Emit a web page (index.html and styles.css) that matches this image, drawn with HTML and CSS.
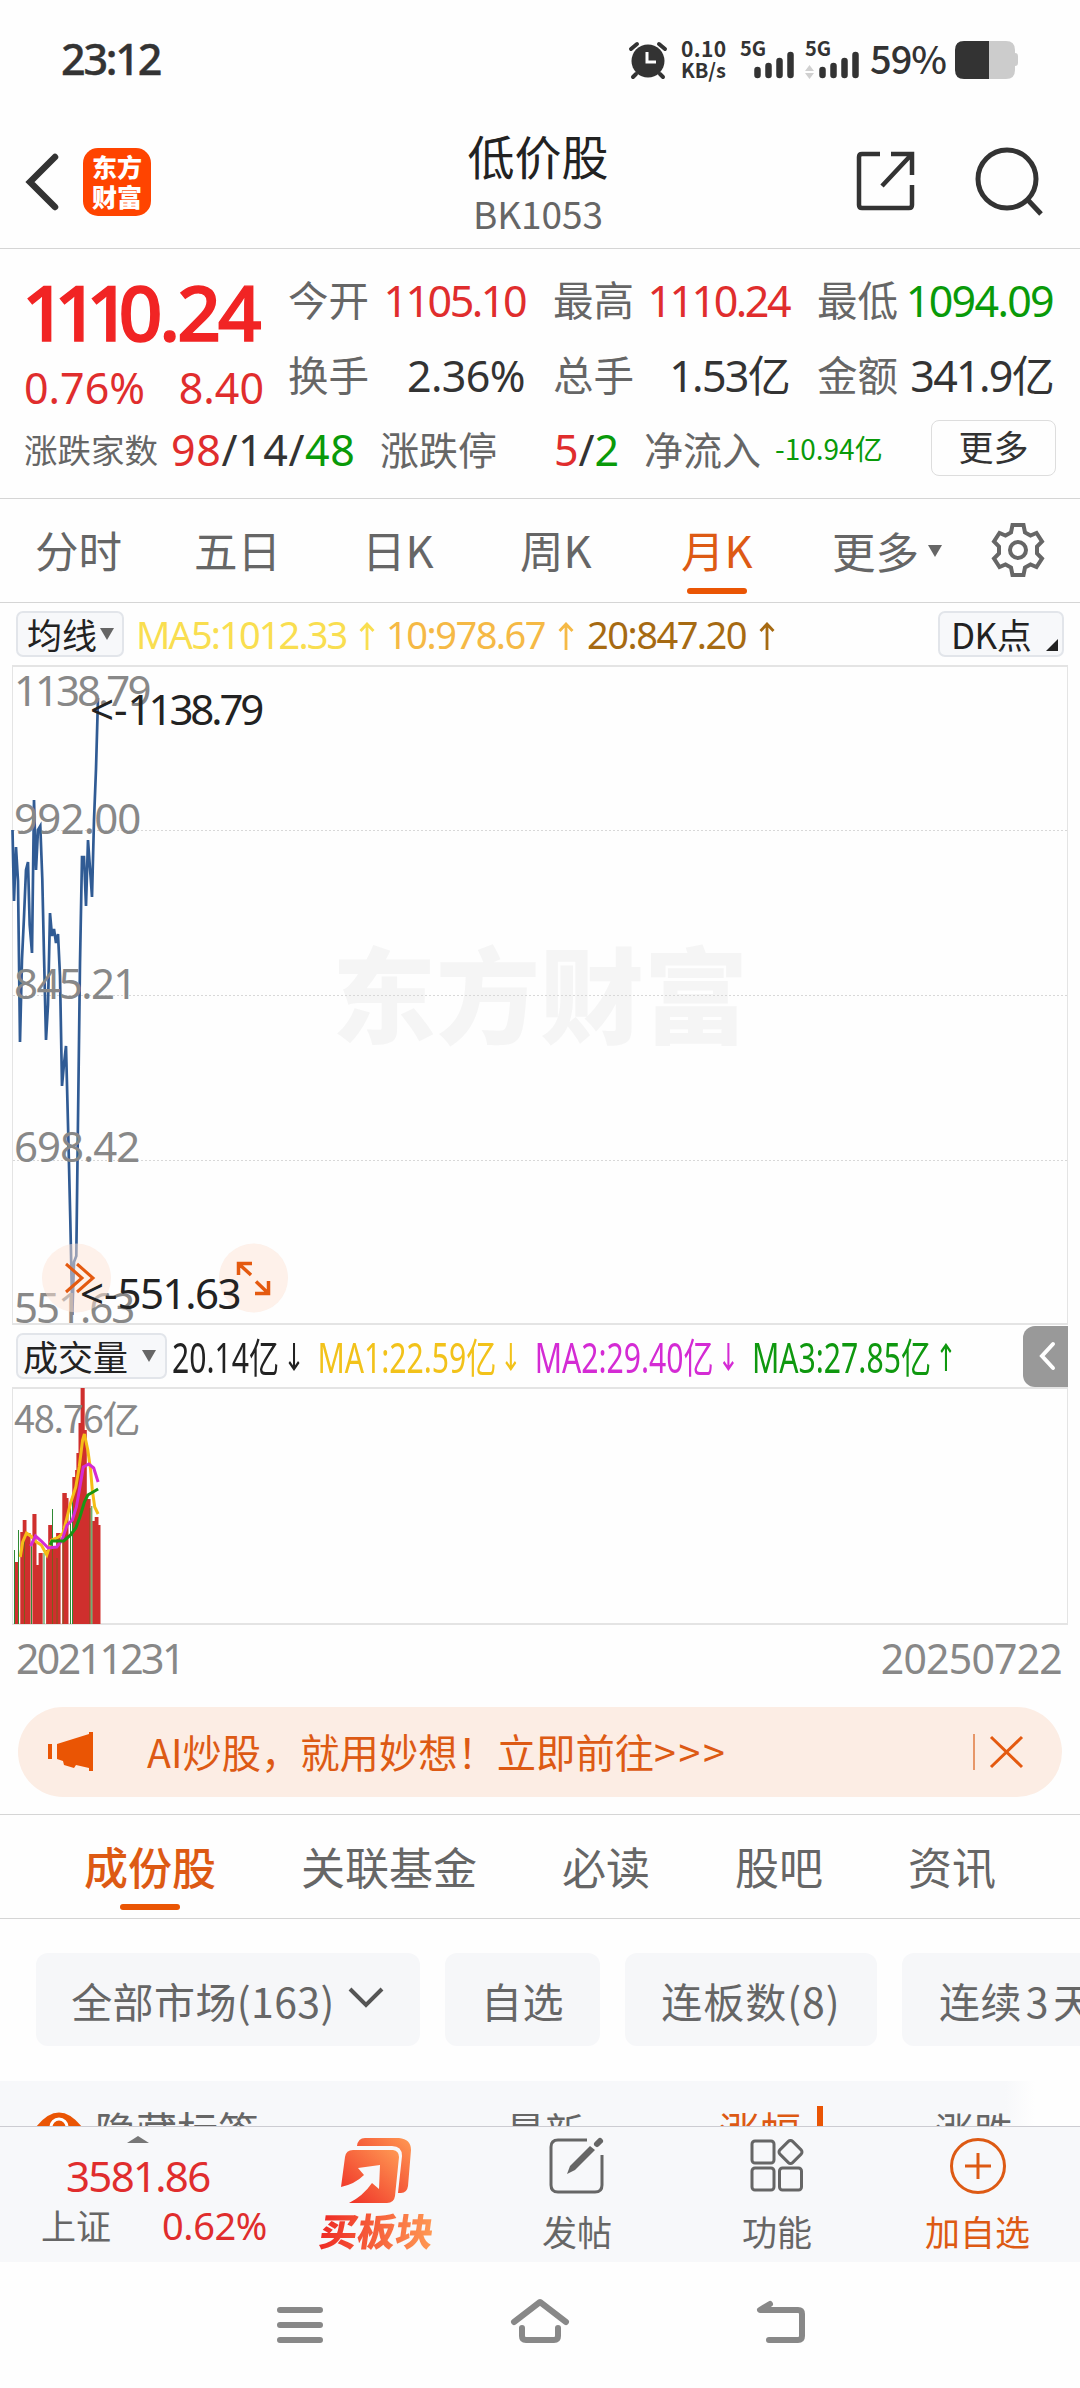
FILE: index.html
```html
<!DOCTYPE html>
<html lang="zh-CN">
<head>
    <meta charset="UTF-8">
    <title>低价股 BK1053</title>

    <link rel="stylesheet" href="styles.css">

</head>
<body>


<!-- 状态栏 -->
<div class="status">
    <span class="status_time">23:12</span>
    <svg class="status_alarm" width="38" height="38" viewBox="0 0 38 38">
        <circle cx="19" cy="20" r="16.5" fill="#333"/>
        <path d="M2 8L8 3M36 8L30 3M7 33L4 36M31 33L34 36" stroke="#333" stroke-width="4" stroke-linecap="round"/>
        <path d="M18 11V21H27" fill="none" stroke="#fff" stroke-width="3"/>
    </svg>
    <div class="status_speed"><b>0.10</b><b>KB/s</b></div>
    <div class="signal">
        <b>5G</b>
        <svg width="54" height="38" viewBox="0 0 54 38">
            <path d="M17.500 29V34M28.500 25V34M39.500 20V34M50.500 14V34" stroke="#333" stroke-width="6.500" stroke-linecap="round"/>
        </svg>
    </div>
    <div class="signal">
        <b>5G</b>
        <svg width="54" height="38" viewBox="0 0 54 38">
            <path d="M0 30L4.500 24L9 30ZM0 32L4.500 38L9 32Z" fill="#d0d0d0"/>
            <path d="M17.500 29V34M28.500 25V34M39.500 20V34M50.500 14V34" stroke="#333" stroke-width="6.500" stroke-linecap="round"/>
        </svg>
    </div>
    <span class="status_power">59%</span>
    <svg class="status_battery" width="63" height="38" viewBox="0 0 63 38">
        <path d="M34 0H51Q60 0 60 9V12Q63 12 63 15V22Q63 25 60 25V29Q60 38 51 38H34Z" fill="#ccc"/>
        <path d="M34 0H9Q0 0 0 9V29Q0 38 9 38H34Z" fill="#333"/>
    </svg>
</div>

<!-- 头部 -->
<header class="header">
    <svg class="header_back" width="34" height="58" viewBox="0 0 34 58">
        <path d="M30 4L5 29L30 54" fill="none" stroke="#333" stroke-width="6.500" stroke-linecap="round"/>
    </svg>
    <div class="header_logo"><span>东方</span><span>财富</span></div>
    <div class="header_title">
        <h1>低价股</h1>
        <p>BK1053</p>
    </div>
    <svg class="header_share" width="60" height="60" viewBox="0 0 60 60">
        <path d="M24 3H6Q3 3 3 6V54Q3 57 6 57H53Q56 57 56 54V34M35 3H56V24M56 3L26 35" fill="none" stroke="#333" stroke-width="4.500"/>
    </svg>
    <svg class="header_search" width="70" height="72" viewBox="0 0 70 72">
        <circle cx="32" cy="33" r="29" fill="none" stroke="#333" stroke-width="5"/>
        <path d="M52 53L66 68" stroke="#333" stroke-width="5"/>
    </svg>
</header>

<!-- 行情 -->
<section class="quote">
    <div class="quote_top">
        <div class="quote_main red">
            <div class="quote_price num"><i>111</i>0.24</div>
            <div class="quote_change num"><span>0.76%</span><span>8.40</span></div>
        </div>
        <dl class="quote_grid">
            <div><dt>今开</dt><dd class="red ones">1105.10</dd></div>
            <div><dt>最高</dt><dd class="red ones">1110.24</dd></div>
            <div><dt>最低</dt><dd class="green unit">1094.09</dd></div>
            <div><dt>换手</dt><dd>2.36%</dd></div>
            <div><dt>总手</dt><dd class="unit">1.53亿</dd></div>
            <div><dt>金额</dt><dd class="unit">341.9亿</dd></div>
        </dl>
    </div>
    <div class="quote_row">
        <span class="label_sm">涨跌家数</span>
        <span class="count num"><span class="red">98</span>/14/<span class="green">48</span></span>
        <span class="label">涨跌停</span>
        <span class="limit num"><span class="red">5</span>/<span class="green">2</span></span>
        <span class="label label_flow">净流入</span>
        <span class="flow green">-10.94亿</span>
        <a class="quote_more" href="#">更多</a>
    </div>
</section>

<!-- 周期 -->
<nav class="period">
    <a href="#">分时</a>
    <a href="#">五日</a>
    <a href="#">日K</a>
    <a href="#">周K</a>
    <a class="period-active" href="#">月K</a>
    <a class="period_more" href="#">更多<i class="arrow"></i></a>
    <svg width="52" height="54" viewBox="0 0 52 54">
        <path d="M20.500 2H31.500L33 9.500L38.500 12.500L44.500 10L50 18.500L45 23.500V30.500L50 35.500L44.500 44L38.500 41.500L33 44.500L31.500 52H20.500L19 44.500L13.500 41.500L7.500 44L2 35.500L7 30.500V23.500L2 18.500L7.500 10L13.500 12.500L19 9.500Z" fill="none" stroke="#666" stroke-width="4"/>
        <circle cx="26" cy="27" r="8" fill="none" stroke="#666" stroke-width="4"/>
    </svg>
</nav>

<!-- K线 -->
<section class="chart">
    <div class="ma">
        <a class="tag" href="#">均线<i class="arrow"></i></a>
        <span class="ma_5 num">MA5:1012.33<svg width="16" height="28"><use href="#up"/></svg></span>
        <span class="ma_10 num">10:978.67<svg width="16" height="28"><use href="#up"/></svg></span>
        <span class="ma_20 num">20:847.20<svg width="16" height="28"><use href="#up"/></svg></span>
        <a class="tag tag_dk" href="#">DK点</a>
    </div>

    <div class="kline">
        <div class="kline_mark">东方财富</div>
        <svg class="kline_line" width="1054" height="657" viewBox="13 667 1054 657">
            <path d="M13 830.500H1067M13 995.500H1067M13 1160.500H1067" stroke="#d8d8d8" stroke-dasharray="2 2"/>
            <g transform="translate(0 660)">
                <polyline points="12.5,170 14,241 16,187 18,221 20,382 22,299 24,257 26,210 28,202 29.7,265 32,293 34,140 36,210 38,170 40.3,166 42.3,219 44,295 46,380 48,345 50,253 52,276 54,269 56,283 58,274 60,316 62,426 64,404 66,386 68.3,476 70.3,560 72.3,655 74,602 76.3,596 77.7,484 80,303 82,197 84,197 86,246 88,180 92,237 94,160 96,109 98,38" fill="none" stroke="#305b94" stroke-width="2.700"/>
            </g>
        </svg>
        <span class="axis axis_1 num">1138.79</span>
        <span class="axis axis_2 num">992.00</span>
        <span class="axis axis_3 num">845.21</span>
        <span class="axis axis_4 num">698.42</span>
        <span class="axis axis_5 num">551.63</span>
        <svg class="kline_tools" width="250" height="72" viewBox="40 1242 250 72">
            <circle cx="76.500" cy="1278" r="34.500" fill="#fde3d6" fill-opacity=".5"/>
            <circle cx="253.500" cy="1278" r="34.500" fill="#fde3d6" fill-opacity=".5"/>
            <path d="M66 1264L82 1278L66 1292M77 1264L93 1278L77 1292" fill="none" stroke="#e45a10" stroke-width="3"/>
            <path d="M252 1263.500H238.500V1275M239 1264L251 1275M255 1293.500H268.500V1281M268 1293L256 1281.500" fill="none" stroke="#e45a10" stroke-width="3.500"/>
        </svg>
        <span class="peak peak_high num"><i>&lt;-</i>1138.79</span>
        <span class="peak peak_low num"><i>&lt;-</i>551.63</span>
    </div>

    <div class="ma ma_vol">
        <a class="tag tag_vol" href="#">成交量<i class="arrow"></i></a>
        <div class="vol_text num">
            <span>20.14亿<svg width="16" height="28"><use href="#down"/></svg></span>
            <span class="vol_1">MA1:22.59亿<svg width="16" height="28"><use href="#down"/></svg></span>
            <span class="vol_2">MA2:29.40亿<svg width="16" height="28"><use href="#down"/></svg></span>
            <span class="vol_3">MA3:27.85亿<svg width="16" height="28"><use href="#up"/></svg></span>
        </div>
        <a class="drawer" href="#">
            <svg width="18" height="30" viewBox="0 0 18 30"><path d="M15 3L4 15L15 27" fill="none" stroke="#fff" stroke-width="4" stroke-linecap="round"/></svg>
        </a>
    </div>

    <div class="volume">
        <svg width="1054" height="235" viewBox="13 1 1054 235">
            <path d="M14.500 236V174H18.600V236ZM20.300 236V144H22.700V132H26.500V145H30.600V236ZM32.400 236V126H36.500V177H38.600V165H42.700V236ZM46.100 236V162H48.200V137H52.300V160H56.100V145H60.600V236ZM62.300 236V105H66.800V110H68.500V236ZM72.300 236V89H75.100V82H76.400V65H78.500V35H80.600V0H84.700V42H86.800V111H90.600V236ZM92.300 236V133H94.700V129H98.500V137H100.500V236Z" fill="#cf2f2d"/>
            <path d="M14.500 236V162M18.500 236V142M31.500 236V155M44 236V165M52.500 160V121M70.500 236V118M72.500 236V105M91.800 236V118" stroke="#2f8a35" stroke-width="1"/>
            <path d="M24.500 236V150M52.500 236V160M57 236V170M63 236V140M90 236V120" stroke="#7d5a1c" stroke-width="1"/>
            <g fill="none" stroke-width="3">
                <polyline points="20.3,169 22.7,154 26.5,145 30.6,148 36.5,154 41.3,157 46.8,167 51.7,152 58.5,149 63,145 67.1,129 70.6,115 75.8,99 79.2,79 82.6,52 84.4,46 87.8,62 90.6,82 92.3,102 94.7,119 98.1,126" stroke="#f5bd17"/>
                <polyline points="30.6,158 35.5,148 41.3,153 48.2,160 56.8,159 62,152 67.1,137 72.3,132 76.4,119 79.9,99 83.3,79 88.8,76 93.7,80 98.1,94" stroke="#d42bd4"/>
                <polyline points="50,157 52,153 63.7,153 70.6,147 75.8,140 79.9,129 84.4,114 87.8,107 93,104 98.1,101" stroke="#1a9414"/>
            </g>
        </svg>
        <span class="volume_max">48.76亿</span>
    </div>

    <div class="dates num"><span class="ones">20211231</span><span>20250722</span></div>
</section>

<!-- 广告条 -->
<div class="ad">
    <svg class="ad_horn" width="46" height="42" viewBox="0 0 46 42">
        <path d="M2 13V28" stroke="#ea5504" stroke-width="4"/>
        <path d="M9 13L41 3V1H45V40H41V37L28 34L26 37L16 34L15 30L9 28Z" fill="#ea5504"/>
    </svg>
    <span class="ad_text">AI炒股，就用妙想！立即前往<i>&gt;&gt;&gt;</i></span>
    <svg class="ad_close" width="52" height="38" viewBox="0 0 52 38">
        <path d="M1 1V37" stroke="#e07a40" stroke-width="1.500"/>
        <path d="M18 4L49 34M49 4L18 34" stroke="#e45a10" stroke-width="3"/>
    </svg>
</div>

<!-- 栏目 -->
<nav class="tabs">
    <a class="tabs-active" href="#">成份股</a>
    <a href="#">关联基金</a>
    <a href="#">必读</a>
    <a href="#">股吧</a>
    <a href="#">资讯</a>
</nav>

<div class="chips">
    <a href="#">全部市场(163)<svg width="38" height="24" viewBox="0 0 38 24"><path d="M3 3L19 19L35 3" fill="none" stroke="#555" stroke-width="4"/></svg></a>
    <a href="#">自选</a>
    <a href="#">连板数(8)</a>
    <a class="chips_last" href="#">连续<i>3</i>天</a>
</div>

<div class="thead">
    <svg width="46" height="30" viewBox="0 0 46 30">
        <path d="M0 15Q23 -14 46 15V30H0Z" fill="#ea5504"/>
        <circle cx="23" cy="15" r="8" fill="none" stroke="#fff" stroke-width="3"/>
    </svg>
    <span class="thead_tag">隐藏标签</span>
    <span class="thead_new">最新</span>
    <span class="thead_rate">涨幅</span>
    <i></i>
    <span class="thead_diff">涨跌</span>
</div>

<!-- 底部 -->
<footer class="footer">
    <div class="index">
        <i></i>
        <p class="index_num red num">3581.86</p>
        <p class="index_row"><span>上证</span><span class="red num">0.62%</span></p>
    </div>
    <a class="buy" href="#">
        <svg width="72" height="66" viewBox="0 0 72 66">
            <defs>
                <linearGradient id="hot" x1="0" y1="1" x2="1" y2="0">
                    <stop offset="0" stop-color="#ee2a24"/>
                    <stop offset="1" stop-color="#ff9a54"/>
                </linearGradient>
            </defs>
            <path d="M16 8Q17 0 24 0H58Q70 1 70 12L67 48Q66 55 60 55H57L61 18Q61 8 51 8Z" fill="url(#hot)"/>
            <path d="M4 19Q5 12 12 12H52Q58 13 58 19L54 58Q53 65 46 65H8Q22 58 31 45L38 51L39 27L17 30L23 37Q14 46 0 49Z" fill="url(#hot)"/>
        </svg>
        <span>买板块</span>
    </a>
    <a class="post" href="#">
        <svg width="56" height="56" viewBox="0 0 56 56">
            <path d="M38 2H9Q2 2 2 9V47Q2 54 9 54H46Q53 54 53 47V17" fill="none" stroke="#666" stroke-width="3"/>
            <path d="M18 36L21 28L41 8L46 12L26 32Z" fill="#666"/>
            <path d="M48 6L51 3" stroke="#666" stroke-width="6" stroke-linecap="round"/>
        </svg>
        <span>发帖</span>
    </a>
    <a class="func" href="#">
        <svg width="54" height="56" viewBox="0 0 54 56">
            <g fill="none" stroke="#666" stroke-width="3">
                <rect x="2" y="3" width="22" height="22" rx="3"/>
                <rect x="2" y="30" width="22" height="22" rx="3"/>
                <rect x="29.500" y="30" width="22" height="22" rx="3"/>
                <rect x="31.500" y="5" width="18" height="18" rx="3" transform="rotate(45 40.500 14)"/>
            </g>
        </svg>
        <span>功能</span>
    </a>
    <a class="add" href="#">
        <svg width="58" height="58" viewBox="0 0 58 58">
            <circle cx="29" cy="29" r="26.500" fill="none" stroke="#dd5a14" stroke-width="3"/>
            <path d="M16 29H42M29 16V42" stroke="#dd5a14" stroke-width="3"/>
        </svg>
        <span>加自选</span>
    </a>
</footer>

<div class="sysnav">
    <svg width="46" height="44" viewBox="0 0 46 44"><path d="M3 7H43M3 22H43M3 37H43"/></svg>
    <svg width="58" height="44" viewBox="0 0 58 44"><path d="M3 19L29 -1L55 19M11 25V33Q11 37 15 37H43Q47 37 47 33V25"/></svg>
    <svg width="48" height="44" viewBox="0 0 48 44"><path d="M13 1L3 7H41Q45 7 45 11V33Q45 37 41 37H12"/></svg>
</div>

<svg class="symbols" width="0" height="0">
    <symbol id="up" viewBox="0 0 16 28"><path d="M8 28V2M1.500 9L8 2L14.500 9" fill="none" stroke="currentColor" stroke-width="2.800"/></symbol>
    <symbol id="down" viewBox="0 0 16 28"><path d="M8 0V26M1.500 19L8 26L14.500 19" fill="none" stroke="currentColor" stroke-width="2.800"/></symbol>
</svg>

</body>
</html>
```
FILE: styles.css
```css
* {
    box-sizing: border-box;
    margin: 0;
    padding: 0;
}

body {
    width: 1080px;
    height: 2388px;
    overflow: hidden;
    background-color: #fefefe;
    font-family: "Noto Sans CJK SC", sans-serif;
    color: #333;
}

a {
    color: inherit;
    text-decoration: none;
}

i {
    font-style: normal;
}

svg {
    display: block;
    flex: none;
    overflow: visible;
}

span {
    white-space: nowrap;
}

.num,
.quote_grid dd,
.status_time {
    font-family: "Noto Sans", "Noto Sans CJK SC", sans-serif;
}

.symbols {
    position: absolute;
}

.red {
    color: #e02d2d;
}

.green {
    color: #099a09;
}

.arrow {
    border: 7.5px solid transparent;
    border-top: 12px solid #666;
    border-bottom: 0;
}

/* 状态栏 */
.status {
    height: 118px;
    padding-left: 61px;
    display: flex;
    align-items: center;
}

.status_time {
    width: 568px;
    font-size: 43px;
    font-weight: 500;
    letter-spacing: -2.2px;
    line-height: 48px;
    -webkit-text-stroke: .4px #333;
}

.status_alarm {
    margin-top: 1px;
}

.status_speed {
    width: 46px;
    margin: 0 0 0 14px;
    display: flex;
    flex-flow: column nowrap;
    font-size: 21px;
    line-height: 21px;
}

.status_speed b:first-child {
    letter-spacing: .4px;
}

.status_speed b:last-child {
    font-size: 20px;
}

.signal {
    position: relative;
    width: 54px;
    margin: 1px 0 0 11px;
}

.signal:nth-child(4) {
    margin-left: 13px;
}

.signal b {
    position: absolute;
    left: 0;
    top: -3px;
    font-size: 20px;
    line-height: 20px;
}

.status_power {
    margin: -3px 0 0 11px;
    width: 76px;
    font-size: 38px;
    font-weight: 500;
    letter-spacing: -1px;
    line-height: 46px;
}

.status_battery {
    margin: 1px 0 0 9px;
}

/* 头部 */
.header {
    height: 131px;
    border-bottom: 1px solid #d5d5d5;
    display: flex;
    align-items: flex-start;
}

.header_back {
    margin: 35px 0 0 25px;
}

.header_logo {
    width: 68px;
    height: 68px;
    margin: 30px 0 0 24px;
    padding-top: 3px;
    display: flex;
    flex-flow: column nowrap;
    align-items: center;
    border-radius: 15px;
    background-color: #ff4400;
    color: #fff;
    font-size: 25px;
    font-weight: 900;
    line-height: 30px;
}

.header_title {
    width: 300px;
    margin: 9px 0 0 237px;
    text-align: center;
}

.header_title h1 {
    font-size: 47px;
    font-weight: 400;
    line-height: 56px;
    color: #222;
}

.header_title p {
    margin-top: 8px;
    font-size: 37px;
    letter-spacing: -.1px;
    line-height: 44px;
    color: #666;
}

.header_share {
    margin: 33px 0 0 168px;
}

.header_search {
    margin: 28px 0 0 59px;
}

/* 行情 */
.quote {
    height: 250px;
    border-bottom: 1px solid #d5d5d5;
}

.quote_top {
    height: 165px;
    display: flex;
}

.quote_main {
    width: 288px;
    padding-left: 24px;
}

.quote_price {
    height: 104px;
    margin-left: -2px;
    font-size: 77px;
    font-weight: 500;
    letter-spacing: -3.2px;
    line-height: 125px;
    color: #f12424;
    -webkit-text-stroke: 1.4px #f12424;
}

.quote_price i {
    letter-spacing: -11.9px;
}

.quote_change {
    width: 240px;
    display: flex;
    justify-content: space-between;
    font-size: 43px;
    line-height: 69px;
}

.quote_grid {
    padding-top: 17px;
    display: grid;
    grid-template-columns: 237px 236px 236px;
    grid-auto-rows: 75px;
    column-gap: 28px;
}

.quote_grid div {
    display: flex;
    justify-content: space-between;
    line-height: 66px;
}

.quote_grid dt {
    font-size: 40.500px;
    color: #666;
}

.quote_grid dd {
    padding-top: 2px;
    font-size: 43px;
    letter-spacing: -.6px;
}

.quote_grid .ones {
    letter-spacing: -2.5px;
}

.quote_grid .unit {
    letter-spacing: -1.7px;
}

.quote_row {
    padding-left: 24px;
    display: flex;
    align-items: center;
    height: 68px;
    font-size: 43px;
}

.label_sm {
    width: 147px;
    font-size: 33.500px;
    color: #666;
}

.count {
    width: 209px;
    padding-top: 3px;
    letter-spacing: .6px;
}

.label {
    width: 174px;
    font-size: 39px;
    color: #666;
}

.limit {
    width: 90px;
    padding-top: 3px;
}

.label_flow {
    width: 131px;
}

.flow {
    width: 156px;
    font-size: 28px;
}

.quote_more {
    width: 125px;
    height: 56px;
    border: 1px solid #ddd;
    border-radius: 8px;
    text-align: center;
    font-size: 35px;
    line-height: 50px;
}

/* 周期 */
.period {
    height: 104px;
    padding-left: 35px;
    border-bottom: 1px solid #d5d5d5;
    display: flex;
    font-size: 43.500px;
    line-height: 102px;
    color: #666;
}

.period a {
    flex: none;
    width: 159px;
}

.period a:nth-child(2) {
    width: 168px;
}

.period a:nth-child(3) {
    width: 158px;
}

.period a:nth-child(4) {
    width: 161px;
}

.period .period-active {
    position: relative;
    width: 151px;
    color: #dd5a14;
}

.period .period-active::after {
    content: '';
    position: absolute;
    left: 6px;
    bottom: 8px;
    width: 60px;
    height: 6px;
    border-radius: 3px;
    background-color: #ea5504;
}

.period .period_more {
    display: flex;
    align-items: center;
    width: 160px;
}

.period_more .arrow {
    margin-left: 9px;
}

.period svg {
    margin-top: 24px;
}

/* K线 */
.ma {
    position: relative;
    height: 62px;
    padding: 0 16px;
    display: flex;
    align-items: center;
    font-size: 38px;
}

.ma > span {
    display: flex;
    align-items: center;
    height: 50px;
    letter-spacing: -1.5px;
}

.ma > span svg {
    margin: 4px 0 0 13px;
}

.ma .ma_5 {
    width: 250px;
    letter-spacing: -1.9px;
    color: #f9de50;
}

.ma_10 {
    width: 201px;
    color: #f5b945;
}

.ma_20 {
    color: #a66a12;
}

.tag {
    width: 108px;
    height: 46px;
    margin-right: 12px;
    padding-left: 9px;
    border: 2px solid #e2e5ea;
    border-radius: 7px;
    background-color: #f7f8fa;
    display: flex;
    align-items: center;
    font-size: 35px;
    line-height: 38px;
    color: #222;
}

.tag .arrow {
    margin-left: 3px;
}

.tag_dk {
    position: relative;
    width: 126px;
    margin: 0 0 0 auto;
    padding-left: 11px;
    letter-spacing: -.5px;
}

.tag_dk::after {
    content: '';
    position: absolute;
    right: 4px;
    bottom: 4px;
    border-left: 12px solid transparent;
    border-bottom: 12px solid #222;
}

.kline {
    position: relative;
    width: 1056px;
    height: 660px;
    margin-left: 12px;
    border: 2px solid #e4e4e4;
    border-width: 2px 1px 2px 1px;
}

.kline_line,
.kline_tools {
    position: absolute;
    left: 0;
    top: 0;
}

.kline_tools {
    left: 27px;
    top: 575px;
}

.kline_mark {
    position: absolute;
    left: 319px;
    top: 269px;
    font-size: 104px;
    font-weight: 900;
    line-height: 110px;
    color: #f5f5f5;
}

.axis,
.peak,
.volume_max {
    position: absolute;
    left: 1px;
    font-size: 42px;
    line-height: 48px;
    color: #888;
}

.axis_1 {
    top: -1px;
    letter-spacing: -3px;
}

.axis_2 {
    top: 127px;
    letter-spacing: -.8px;
}

.axis_3 {
    top: 292px;
    letter-spacing: -1.6px;
}

.axis_4 {
    top: 455px;
    letter-spacing: -1px;
}

.axis_5 {
    top: 616px;
    letter-spacing: -2px;
}

.peak {
    color: #222;
    letter-spacing: -3.1px;
}

.peak i {
    letter-spacing: 0;
}

.peak_high {
    left: 77px;
    top: 18px;
}

.peak_low {
    left: 67px;
    top: 602px;
    letter-spacing: -1.5px;
}

.ma_vol {
    padding-right: 0;
}

.tag_vol {
    flex: none;
    width: 151px;
    margin-right: 5px;
    padding-left: 5px;
}

.tag_vol .arrow {
    margin-left: 14px;
}

.vol_text {
    display: flex;
    margin-top: -3px;
    font-size: 41px;
    transform: scaleX(.735);
    transform-origin: 0 50%;
    color: #222;
}

.vol_text span {
    flex: none;
    display: flex;
    align-items: center;
    height: 50px;
    margin-right: 24px;
}

.vol_text svg {
    margin: 4px 0 0 12px;
}

.vol_1 {
    color: #f2c21a;
}

.vol_2 {
    color: #d42bd4;
}

.vol_3 {
    color: #0f980f;
}

.drawer {
    position: absolute;
    right: 12px;
    top: 1px;
    width: 45px;
    height: 61px;
    padding: 15px 0 0 15px;
    border-radius: 12px 0 0 12px;
    background-color: #999;
}

.volume {
    position: relative;
    width: 1056px;
    height: 238px;
    margin-left: 12px;
    border: 2px solid #e4e4e4;
    border-width: 2px 1px 2px 1px;
}

.volume_max {
    left: 1px;
    top: 4px;
    font-size: 38px;
    letter-spacing: -1.3px;
}

.dates {
    height: 82px;
    padding: 5px 18px 0 16px;
    display: flex;
    justify-content: space-between;
    font-size: 41px;
    line-height: 56px;
    letter-spacing: -.8px;
    color: #888;
}

.dates .ones {
    letter-spacing: -2.6px;
}

/* 广告条 */
.ad {
    height: 90px;
    margin: 0 18px 17px;
    padding-left: 30px;
    display: flex;
    align-items: center;
    border-radius: 45px;
    background-color: #fcede4;
    font-size: 39.300px;
    color: #dd5a14;
}

.ad_text {
    width: 826px;
    margin: -3px 0 0 53px;
}

.ad_text i {
    letter-spacing: 2.7px;
}

/* 栏目 */
.tabs {
    height: 105px;
    padding-left: 84px;
    border: 1px solid #d5d5d5;
    border-width: 1px 0;
    display: flex;
    gap: 85px;
    font-size: 44px;
    line-height: 102px;
    color: #666;
}

.tabs-active {
    position: relative;
    font-weight: 500;
    color: #dd5a14;
}

.tabs-active::after {
    content: '';
    position: absolute;
    left: 36px;
    bottom: 8px;
    width: 60px;
    height: 6px;
    border-radius: 3px;
    background-color: #ea5504;
}

.chips {
    height: 162px;
    padding: 34px 0 0 36px;
    display: flex;
    gap: 25px;
    font-size: 41px;
    line-height: 90px;
    letter-spacing: .4px;
    color: #666;
    overflow: hidden;
}

.chips a {
    flex: none;
    display: flex;
    align-items: center;
    justify-content: center;
    width: 155px;
    height: 93px;
    border-radius: 12px;
    background-color: #f6f7f9;
}

.chips a:first-child {
    width: 384px;
}

.chips a:nth-child(3) {
    width: 252px;
    letter-spacing: 1px;
}

.chips svg {
    margin: 0 0 4px 12px;
}

.chips .chips_last {
    width: 240px;
    padding-left: 37px;
    justify-content: flex-start;
}

.chips_last i {
    margin: 0 4px;
}

.thead {
    height: 45px;
    padding-left: 36px;
    display: flex;
    align-items: flex-start;
    overflow: hidden;
    background: linear-gradient(to right, #f7f8fa 1005px, #fefefe 1035px);
    font-size: 41px;
    line-height: 50px;
    color: #666;
}

.thead span {
    flex: none;
    margin-top: 23px;
}

.thead svg {
    margin-top: 31px;
}

.thead_tag {
    width: 411px;
    margin-left: 13px;
}

.thead_new {
    width: 213px;
    font-size: 39px;
}

.thead_rate {
    width: 98px;
    color: #dd5a14;
}

.thead i {
    width: 6px;
    height: 30px;
    margin-top: 25px;
    background-color: #ea5504;
}

.thead_diff {
    margin-left: 112px;
    font-size: 39px;
}

/* 底部 */
.footer {
    height: 136px;
    border-top: 1px solid #ccccd2;
    display: flex;
    background-color: #f7f8fa;
    font-size: 35px;
    line-height: 44px;
    color: #666;
}

.footer a {
    display: flex;
    flex-flow: column nowrap;
    align-items: center;
    width: 200px;
    padding-top: 11px;
}

.index {
    width: 277px;
    padding-left: 41px;
}

.index i {
    display: block;
    width: 0;
    margin: 9px 0 0 86px;
    border: 11px solid transparent;
    border-bottom: 7px solid #777;
    border-top: 0;
}

.index_num {
    margin: 9px 0 0 25px;
    font-size: 42px;
    letter-spacing: -1.7px;
    line-height: 48px;
}

.index_row {
    display: flex;
    align-items: center;
    justify-content: space-between;
    width: 226px;
    line-height: 48px;
}

.index_row .red {
    padding-top: 1px;
    font-size: 38px;
    letter-spacing: -.4px;
}

.buy span {
    margin-top: 4px;
    font-size: 38px;
    font-weight: 900;
    line-height: 44px;
    transform: skewX(-8deg);
    background: linear-gradient(to right, #ee2a24, #ff9a54);
    -webkit-background-clip: text;
    color: transparent;
}

.footer .post span,
.footer .func span,
.footer .add span {
    margin-top: 15px;
}

.footer .add {
    width: 201px;
    padding-top: 10px;
    color: #dd5a14;
}

.footer .add span {
    margin-top: 14px;
}

.sysnav {
    height: 126px;
    padding: 41px 0 0 277px;
    display: flex;
    gap: 188px;
}

.sysnav svg path {
    fill: none;
    stroke: #888;
    stroke-width: 6;
    stroke-linecap: round;
    stroke-linejoin: round;
}
```
